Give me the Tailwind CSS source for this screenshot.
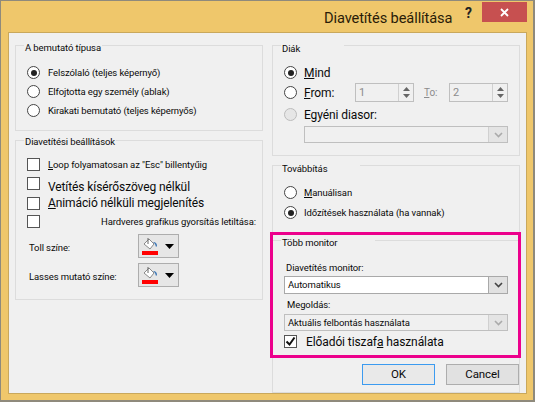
<!DOCTYPE html>
<html lang="hu">
  <head>
    <meta charset="UTF-8" />
    <script src="https://cdn.jsdelivr.net/npm/@tailwindcss/browser@4"></script>
    <title>Diavetítés beállítása</title>
  </head>
  <body class="bg-[#efc76b]">
    <div class="relative w-[535px] h-[402px] overflow-hidden bg-[#efc76b] border-t border-l border-r-2 border-b-2 border-[#8f8a7c] font-['Roboto',sans-serif] text-[9.5px] tracking-[-0.1px] leading-none text-[#0a0a0a] whitespace-nowrap">
      <!-- title bar -->
      <div class="relative h-[31px]">
        <span class="absolute left-[323px] top-[7px] text-[14.6px] leading-[20px] text-[#2a1c08]">Diavetítés beállítása</span>
        <span class="absolute left-[464px] top-[2px] text-[14px] leading-[20px] font-bold text-[#222]">?</span>
        <div class="absolute left-[481px] top-[1px] w-[45px] h-[20px] bg-[#c75050] flex items-center justify-center">
          <svg width="9" height="9" viewBox="0 0 9 9"><path d="M1 1l7 7M8 1l-7 7" stroke="#fff" stroke-width="1.8" /></svg>
        </div>
      </div>

      <!-- client area -->
      <div class="ml-[7px] w-[519px] h-[362px] bg-[#f0f0f0] border border-[#c9a85c] pl-[6px] pt-[12px] flex gap-[9px]">
        <!-- left column -->
        <div class="w-[248px] flex flex-col gap-[9px]">
          <div class="relative h-[86px] border border-[#dcdcdc] pl-[11px] pt-[17px]">
            <span class="absolute left-[8px] -top-[4px] bg-[#f0f0f0] pl-[1px] pr-[1px] leading-[12px]">A bemutató típusa</span>
            <div class="h-[19px] flex items-center gap-[8px]">
              <div class="w-[13px] h-[13px] rounded-full border border-[#444] bg-white flex items-center justify-center"><div class="w-[6px] h-[6px] rounded-full bg-[#222]"></div></div>
              <span>Felszólaló (teljes képernyő)</span>
            </div>
            <div class="h-[19px] flex items-center gap-[8px]">
              <div class="w-[13px] h-[13px] rounded-full border border-[#444] bg-white"></div>
              <span>Elfojtotta egy személy (ablak)</span>
            </div>
            <div class="h-[19px] flex items-center gap-[8px]">
              <div class="w-[13px] h-[13px] rounded-full border border-[#444] bg-white"></div>
              <span>Kirakati bemutató (teljes képernyős)</span>
            </div>
          </div>

          <div class="relative h-[160px] border border-[#dcdcdc] pl-[11px] pt-[17px]">
            <span class="absolute left-[8px] -top-[5px] bg-[#f0f0f0] pl-[1px] pr-[1px] leading-[12px]">Diavetítési beállítások</span>
            <div class="h-[13px] flex items-center gap-[8px]">
              <div class="w-[13px] h-[13px] border border-[#555] bg-white"></div>
              <span><span class="underline">L</span>oop folyamatosan az "Esc" billentyűig</span>
            </div>
            <div class="mt-[6px] h-[14px] flex items-start gap-[8px]">
              <div class="w-[13px] h-[13px] border border-[#555] bg-white"></div>
              <span class="text-[12px] mt-[4px]">Vetítés kísérőszöveg nélkül</span>
            </div>
            <div class="mt-[6px] h-[12px] flex items-center gap-[8px]">
              <div class="w-[13px] h-[13px] border border-[#555] bg-white"></div>
              <span class="text-[12px]"><span class="underline">A</span>nimáció nélküli megjelenítés</span>
            </div>
            <div class="mt-[6px] h-[13px] flex items-center gap-[61px]">
              <div class="w-[13px] h-[13px] border border-[#555] bg-white"></div>
              <span>Hardveres <span class="underline">g</span>rafikus gyorsítás letiltása:</span>
            </div>
            <div class="mt-[6px] h-[24px] ml-[2px] flex items-center">
              <span class="w-[109px] mt-[4px]">Toll színe:</span>
              <div class="w-[41px] h-[24px] border border-[#adadad] bg-[#e6e6e6] flex items-center pl-[3px] gap-[6px]">
                <svg width="17" height="19" viewBox="0 0 17 19"><path d="M2 7l5-5 5 5-4 5z" fill="#fff" stroke="#8a8a8a" /><path d="M6 1v6" stroke="#666" /><path d="M11 5q4 0 4 4l-1 1-1-3z" fill="#3f78b5" /><rect x="0" y="14" width="16" height="4" fill="#f00" /></svg>
                <svg width="9" height="5" viewBox="0 0 9 5"><path d="M0 0h9L4.500 5z" fill="#000" /></svg>
              </div>
            </div>
            <div class="mt-[5px] h-[24px] ml-[2px] flex items-center">
              <span class="w-[109px] mt-[4px]">Lasses mutató színe:</span>
              <div class="w-[41px] h-[24px] border border-[#adadad] bg-[#e6e6e6] flex items-center pl-[3px] gap-[6px]">
                <svg width="17" height="19" viewBox="0 0 17 19"><path d="M2 7l5-5 5 5-4 5z" fill="#fff" stroke="#8a8a8a" /><path d="M6 1v6" stroke="#666" /><path d="M11 5q4 0 4 4l-1 1-1-3z" fill="#3f78b5" /><rect x="0" y="14" width="16" height="4" fill="#f00" /></svg>
                <svg width="9" height="5" viewBox="0 0 9 5"><path d="M0 0h9L4.500 5z" fill="#000" /></svg>
              </div>
            </div>
          </div>
        </div>

        <!-- right column -->
        <div class="w-[248px] flex flex-col gap-[9px]">
          <div class="relative h-[111px] border border-[#dcdcdc] pl-[11px] pt-[20px]">
            <span class="absolute left-[8px] -top-[3px] bg-[#f0f0f0] pl-[1px] pr-[44px] leading-[12px]">Diák</span>
            <div class="h-[13px] flex items-center gap-[7px]">
              <div class="w-[13px] h-[13px] rounded-full border border-[#444] bg-white flex items-center justify-center"><div class="w-[6px] h-[6px] rounded-full bg-[#222]"></div></div>
              <span class="text-[12px]"><span class="underline">M</span>ind</span>
            </div>
            <div class="mt-[1px] h-[25px] flex items-center">
              <div class="w-[13px] h-[13px] rounded-full border border-[#444] bg-white"></div>
              <span class="text-[12px] ml-[7px] w-[51px]"><span class="underline">F</span>rom:</span>
              <div class="w-[59px] h-[19px] border border-[#bfbfbf] flex items-center justify-between pl-[3px] text-[11px] text-[#8c8c8c]">
                <span>1</span>
                <div class="w-[15px] h-full border-l border-[#d0d0d0] flex flex-col items-center justify-center gap-[3px]">
                  <svg width="7" height="4" viewBox="0 0 7 4"><path d="M3.500 0L7 4H0z" fill="#666" /></svg>
                  <svg width="7" height="4" viewBox="0 0 7 4"><path d="M0 0h7L3.500 4z" fill="#666" /></svg>
                </div>
              </div>
              <span class="w-[35px] pl-[10px] text-[#8c8c8c] text-[10px]"><span class="underline">T</span>o:</span>
              <div class="w-[59px] h-[19px] border border-[#bfbfbf] flex items-center justify-between pl-[3px] text-[11px] text-[#8c8c8c]">
                <span>2</span>
                <div class="w-[15px] h-full border-l border-[#d0d0d0] flex flex-col items-center justify-center gap-[3px]">
                  <svg width="7" height="4" viewBox="0 0 7 4"><path d="M3.500 0L7 4H0z" fill="#666" /></svg>
                  <svg width="7" height="4" viewBox="0 0 7 4"><path d="M0 0h7L3.500 4z" fill="#666" /></svg>
                </div>
              </div>
            </div>
            <div class="mt-[3px] h-[13px] flex items-center gap-[7px]">
              <div class="w-[13px] h-[13px] rounded-full border border-[#bcbcbc] bg-[#e6e6e6]"></div>
              <span class="text-[12px]">Egyéni diasor:</span>
            </div>
            <div class="mt-[5px] ml-[20px] w-[204px] h-[17px] border border-[#bfbfbf] flex justify-end">
              <div class="w-[19px] h-full bg-[#e4e4e4] border-l border-[#d0d0d0] flex items-center justify-center">
                <svg width="9" height="6" viewBox="0 0 9 6"><path d="M1 1l3.500 3.500L8 1" fill="none" stroke="#aaa" stroke-width="1.600" /></svg>
              </div>
            </div>
          </div>

          <div class="relative grow border border-[#dcdcdc] pl-[11px] pt-[20px]">
            <span class="absolute left-[8px] -top-[3px] bg-[#f0f0f0] pl-[1px] pr-[33px] leading-[12px]">Továbbítás</span>
            <div class="h-[13px] flex items-center gap-[7px]">
              <div class="w-[13px] h-[13px] rounded-full border border-[#444] bg-white"></div>
              <span><span class="underline">M</span>anuálisan</span>
            </div>
            <div class="mt-[7px] h-[13px] flex items-center gap-[7px]">
              <div class="w-[13px] h-[13px] rounded-full border border-[#444] bg-white flex items-center justify-center"><div class="w-[6px] h-[6px] rounded-full bg-[#222]"></div></div>
              <span>Időzítések használata (ha vannak)</span>
            </div>

            <!-- highlighted monitor group, drawn over the bottom of the panel -->
            <div class="absolute -left-[3px] top-[66px] w-[251px] h-[126px] border-[3px] border-[#ec008c] bg-[#f0f0f0] pl-[11px]">
              <div class="flex h-[14px] items-start -ml-[11px]">
                <span class="w-[8px] h-px bg-[#dcdcdc] mt-[5px]"></span>
                <span class="pl-[1px] pt-[3px] pr-[38px]">Több monitor</span>
                <span class="grow h-px bg-[#dcdcdc] mt-[5px]"></span>
              </div>
              <div class="mt-[13px] leading-[12px] ml-[2px]">Diavetítés monitor:</div>
              <div class="mt-[2px] w-[224px] h-[18px] border border-[#a9a9a9] bg-white flex items-center justify-between pl-[3px]">
                <span>Automatikus</span>
                <div class="w-[19px] h-full bg-[#e1e1e1] border-l border-[#a9a9a9] flex items-center justify-center">
                  <svg width="9" height="6" viewBox="0 0 9 6"><path d="M1 1l3.500 3.500L8 1" fill="none" stroke="#444" stroke-width="1.600" /></svg>
                </div>
              </div>
              <div class="mt-[5px] leading-[12px] ml-[3px]">Megoldás:</div>
              <div class="mt-[3px] w-[224px] h-[17px] border border-[#bfbfbf] flex items-center justify-between pl-[3px]">
                <span>Aktuális felbontás használata</span>
                <div class="w-[19px] h-full bg-[#e4e4e4] border-l border-[#d0d0d0] flex items-center justify-center">
                  <svg width="9" height="6" viewBox="0 0 9 6"><path d="M1 1l3.500 3.500L8 1" fill="none" stroke="#aaa" stroke-width="1.600" /></svg>
                </div>
              </div>
              <div class="mt-[4px] h-[13px] flex items-center gap-[9px]">
                <div class="w-[13px] h-[13px] border border-[#555] bg-white flex items-center justify-center">
                  <svg width="11" height="11" viewBox="0 0 11 11"><path d="M1.500 5.500l3 3 5-7" fill="none" stroke="#111" stroke-width="2" /></svg>
                </div>
                <span class="text-[12px]">Előadói tiszaf<span class="underline">a</span> használata</span>
              </div>
            </div>

            <!-- dialog buttons -->
            <div class="absolute left-[89px] top-[198px] flex gap-[11px] text-[11.5px]">
              <div class="w-[73px] h-[21px] border border-[#3c9bf0] bg-[#e9e9e9] flex items-center justify-center">OK</div>
              <div class="w-[73px] h-[21px] border border-[#adadad] bg-[#e1e1e1] flex items-center justify-center">Cancel</div>
            </div>
          </div>
        </div>
      </div>
    </div>
  </body>
</html>
